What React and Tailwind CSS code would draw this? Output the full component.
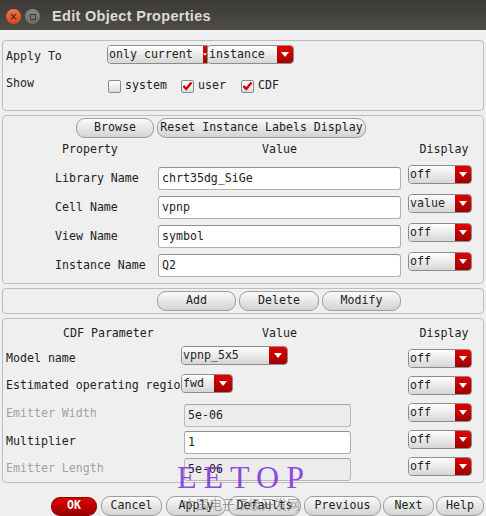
import React from 'react';
import { clsx } from 'clsx';

// Small white down-arrow for the red combo buttons
const Arrow = () => (
    <svg width="8" height="5" viewBox="0 0 8 5">
        <path d="M0 0 L8 0 L4 5 Z" fill="#ffffff" />
    </svg>
);

const Combo = ({ value, className, redClass = 'w-[16px]' }) => (
    <div className={clsx('flex h-[19px] rounded-[4px] border border-[#8c8c8c] overflow-hidden shrink-0', className)}>
        <div className="flex-1 bg-linear-to-b from-white to-[#d6d6d6] pl-[1px] leading-[17px] whitespace-nowrap overflow-hidden">{value}</div>
        <div className={clsx('bg-linear-to-b from-[#e20000] to-[#9e0000] flex items-center justify-center', redClass)}>
            <Arrow />
        </div>
    </div>
);

const Input = ({ value, className, disabled }) => (
    <div
        className={clsx(
            'h-[23px] rounded-[3px] border pl-[3px] leading-[21px] shrink-0',
            disabled ? 'bg-[#ececec] border-[#b9b9b9] border-t-[#a5a5a5]' : 'bg-white border-[#b0b0b0] border-t-[#8f8f8f]',
            className
        )}
    >
        {value}
    </div>
);

const Button = ({ children, className }) => (
    <div
        className={clsx(
            'h-[20px] rounded-[9px] border border-[#9e9e9e] bg-linear-to-b from-[#fbfbfb] to-[#d3d3d3] flex items-center justify-center shrink-0',
            className
        )}
    >
        {children}
    </div>
);

const Check = ({ checked }) => (
    <div className="w-[13px] h-[13px] rounded-[2px] border border-[#8a8a8a] bg-linear-to-b from-white to-[#dcdcdc] flex items-center justify-center shrink-0">
        {checked && (
            <svg width="11" height="10" viewBox="0 0 11 10">
                <path d="M1.5 5 L4.2 8 L9.5 1.5" stroke="#d10000" strokeWidth="2.4" fill="none" />
            </svg>
        )}
    </div>
);

const propRows = [
    { label: 'Library Name', value: 'chrt35dg_SiGe', display: 'off' },
    { label: 'Cell Name', value: 'vpnp', display: 'value' },
    { label: 'View Name', value: 'symbol', display: 'off' },
    { label: 'Instance Name', value: 'Q2', display: 'off' },
];

const App = () => {
    return (
        <div className="relative w-[486px] h-[516px] bg-[#efefef] overflow-hidden font-['DejaVu_Sans_Mono',monospace] text-[11.6px] text-[#222222]">
            {/* TITLE BAR */}
            <div className="h-[30px] bg-linear-to-b from-[#3b3a36] to-[#4e4c46] flex items-center pl-[6px] pt-[3px]">
                <div className="w-[15px] h-[15px] rounded-full bg-linear-to-b from-[#f0774a] to-[#d4441b] flex items-center justify-center text-[#3a1a10] text-[10px] leading-none font-['DejaVu_Sans',sans-serif]">×</div>
                <div className="ml-[4px] w-[15px] h-[15px] rounded-full bg-linear-to-b from-[#8a8883] to-[#6e6c67] flex items-center justify-center">
                    <div className="w-[6px] h-[6px] border border-[#3c3b37]"></div>
                </div>
                <div className="ml-[12px] text-[#dfdbd2] font-bold text-[14.5px] font-['Liberation_Sans',sans-serif] tracking-[0.3px]">Edit Object Properties</div>
            </div>

            <div className="px-[2px] pt-[10px] flex flex-col">
                {/* APPLY TO / SHOW */}
                <div className="h-[71px] rounded-[4px] border border-[#bdbdbd] pt-[4px]">
                    <div className="flex items-center h-[18px]">
                        <div className="w-[104px] pl-[3px] pt-[6px]">Apply To</div>
                        <Combo value="only current" className="w-[101px] rounded-r-none" redClass="w-[4px]" />
                        <Combo value="instance" className="w-[87px] -ml-[1px]" />
                    </div>
                    <div className="flex items-center h-[18px] mt-[14px]">
                        <div className="w-[105px] pl-[3px] -mt-[5px]">Show</div>
                        <Check />
                        <span className="ml-[4px] w-[56px]">system</span>
                        <Check checked />
                        <span className="ml-[4px] w-[43px]">user</span>
                        <Check checked />
                        <span className="ml-[4px]">CDF</span>
                    </div>
                </div>

                {/* PROPERTIES */}
                <div className="mt-[4px] h-[169px] rounded-[4px] border border-[#bdbdbd] pt-[2px]">
                    <div className="flex items-center">
                        <Button className="ml-[73px] w-[78px]">Browse</Button>
                        <Button className="ml-[3px] w-[209px]">Reset Instance Labels Display</Button>
                    </div>
                    <div className="flex items-center h-[22px] mt-[1px]">
                        <div className="w-[155px] pl-[59px]">Property</div>
                        <div className="w-[243px] text-center">Value</div>
                        <div className="ml-[7px] w-[64px] text-center pl-[8px]">Display</div>
                    </div>
                    <div className="flex flex-col gap-[6px] mt-[6px]">
                        {propRows.map(r => (
                            <div key={r.label} className="flex items-center h-[23px]">
                                <div className="w-[155px] pl-[52px]">{r.label}</div>
                                <Input value={r.value} className="w-[243px]" />
                                <Combo value={r.display} className="ml-[7px] w-[64px] -mt-[8px]" />
                            </div>
                        ))}
                    </div>
                </div>

                {/* ADD / DELETE / MODIFY */}
                <div className="mt-[4px] h-[26px] rounded-[4px] border border-[#bdbdbd] flex items-center">
                    <Button className="ml-[154px] w-[79px]">Add</Button>
                    <Button className="ml-[3px] w-[80px]">Delete</Button>
                    <Button className="ml-[3px] w-[79px]">Modify</Button>
                </div>

                {/* CDF PARAMETERS */}
                <div className="mt-[4px] h-[165px] rounded-[4px] border border-[#bdbdbd]">
                    <div className="flex items-center h-[22px] mt-[4px]">
                        <div className="w-[155px] pl-[60px]">CDF Parameter</div>
                        <div className="w-[243px] text-center">Value</div>
                        <div className="ml-[7px] w-[64px] text-center pl-[8px]">Display</div>
                    </div>
                    <div className="flex flex-col">
                        <div className="flex items-center h-[27px]">
                            <div className="w-[178px] pl-[3px] whitespace-nowrap overflow-hidden">Model name</div>
                            <Combo value="vpnp_5x5" className="w-[107px] -mt-[6px]" redClass="w-[18px]" />
                            <Combo value="off" className="ml-[120px] w-[64px]" />
                        </div>
                        <div className="flex items-center h-[27px]">
                            <div className="w-[178px] pl-[3px] whitespace-nowrap overflow-hidden">Estimated operating regio</div>
                            <Combo value="fwd" className="w-[52px] -mt-[4px]" redClass="w-[18px]" />
                            <Combo value="off" className="ml-[175px] w-[64px]" />
                        </div>
                        <div className="flex items-center h-[27px]">
                            <div className="w-[181px] pl-[3px] pt-[3px] text-[#a3a3a3]">Emitter Width</div>
                            <Input value="5e-06" disabled className="w-[167px] mt-[5px]" />
                            <Combo value="off" className="ml-[57px] w-[64px]" />
                        </div>
                        <div className="flex items-center h-[27px]">
                            <div className="w-[181px] pl-[3px] pt-[5px]">Multiplier</div>
                            <Input value="1" className="w-[167px] mt-[5px]" />
                            <Combo value="off" className="ml-[57px] w-[64px]" />
                        </div>
                        <div className="flex items-center h-[27px]">
                            <div className="w-[181px] pl-[3px] pt-[5px] text-[#a3a3a3]">Emitter Length</div>
                            <Input value="5e-06" disabled className="w-[167px] mt-[5px]" />
                            <Combo value="off" className="ml-[57px] w-[64px]" />
                        </div>
                    </div>
                </div>

                {/* DIALOG BUTTONS */}
                <div className="mt-[13px] flex items-center">
                    <div className="ml-[49px] w-[47px] h-[19px] rounded-[9px] border border-[#8a0000] bg-linear-to-b from-[#dc0000] to-[#9c0000] flex items-center justify-center text-white font-bold">OK</div>
                    <Button className="ml-[4px] w-[61px] h-[19px]">Cancel</Button>
                    <Button className="ml-[4px] w-[60px] h-[19px]">Apply</Button>
                    <Button className="ml-[2px] w-[73px] h-[19px]">Defaults</Button>
                    <Button className="ml-[3px] w-[77px] h-[19px]">Previous</Button>
                    <Button className="ml-[2px] w-[51px] h-[19px]">Next</Button>
                    <Button className="ml-[2px] w-[48px] h-[19px]">Help</Button>
                </div>
            </div>

            {/* WATERMARK */}
            <div className="absolute left-[177px] top-[461px] text-[32px] leading-none font-['Liberation_Serif',serif] text-[#7a2ee0]/85 tracking-[7px] pointer-events-none">EETOP</div>
            <div className="absolute left-[183px] top-[497px] text-[13px] leading-none font-['Noto_Sans_CJK_SC',sans-serif] text-[#6e6e6e]/60 pointer-events-none">中国电子顶级开发网</div>
        </div>
    );
};

export default App;
